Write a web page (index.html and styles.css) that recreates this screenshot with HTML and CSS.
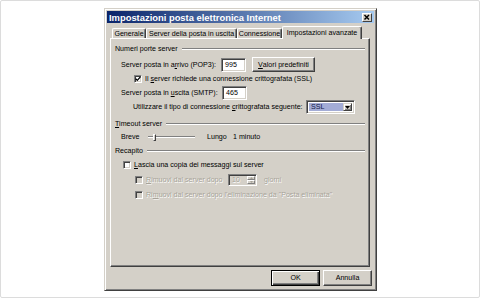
FILE: index.html
```html
<!DOCTYPE html>
<html lang="it">
<head>
  <meta charset="UTF-8">
  <meta name="viewport" content="width=device-width, initial-scale=1.0">
  <title>Impostazioni posta elettronica Internet</title>
  <link rel="stylesheet" href="styles.css">
</head>
<body>
  <div class="frame">
    <div class="dialog">
      <div class="titlebar">
        <span class="title">Impostazioni posta elettronica Internet</span>
        <span class="close">
          <svg width="8" height="7" viewBox="0 0 8 7"><path d="M1.5 1l4.5 4.6M6 1L1.5 5.6" stroke="#000" stroke-width="1.4" fill="none"/></svg>
        </span>
      </div>

      <div class="tabs">
        <div class="tab t1">Generale</div>
        <div class="tab t2">Server della posta in uscita</div>
        <div class="tab t3">Connessione</div>
        <div class="tab t4 active">Impostazioni avanzate</div>
      </div>

      <div class="panel">
        <div class="legend first"><span>Numeri porte server</span><i class="etch"></i></div>

        <div class="row pop">
          <span class="lbl w100">Server posta in a<u>r</u>rivo (POP3):</span>
          <span class="field">995</span>
          <span class="btn defaults"><u>V</u>alori predefiniti</span>
        </div>

        <div class="row ssl">
          <span class="check">
            <svg width="6" height="6" viewBox="0 0 6 6"><polyline points="0.6,2.6 2.3,4.4 5.4,0.9" stroke="#000" stroke-width="1.3" fill="none"/></svg>
          </span>
          <span class="cl">Il <u>s</u>erver richiede una connessione crittografata (SSL)</span>
        </div>

        <div class="row smtp">
          <span class="lbl w101">Server posta in <u>u</u>scita (SMTP):</span>
          <span class="field">465</span>
        </div>

        <div class="row crypt">
          <span class="lbl w173">Utilizzare il tipo di connessione <u>c</u>rittografata seguente:</span>
          <span class="select">
            <span class="sel-val">SSL</span>
            <span class="sel-btn">
              <svg width="5" height="3" viewBox="0 0 5 3"><polygon points="0,0 5,0 2.5,3" fill="#000"/></svg>
            </span>
          </span>
        </div>

        <div class="legend second"><span><u>T</u>imeout server</span><i class="etch"></i></div>

        <div class="row slider-row">
          <span class="lbl w27">Breve</span>
          <span class="slider"><i class="track"></i><i class="thumb"></i></span>
          <span class="lbl w26 lungo">Lungo</span>
          <span>1 minuto</span>
        </div>

        <div class="legend third"><span>Recapito</span><i class="etch"></i></div>

        <div class="row keep">
          <span class="check"></span>
          <span class="cl"><u>L</u>ascia una copia dei messaggi sul server</span>
        </div>

        <div class="row remove1 off">
          <span class="check"></span>
          <span class="cl w82"><u>R</u>imuovi dal server dopo</span>
          <span class="spin">
            <span class="spin-val">10</span>
            <span class="spin-btns">
              <span class="spin-b"><svg width="3" height="2" viewBox="0 0 3 2"><polygon points="0,2 3,2 1.5,0" fill="#a7a399"/></svg></span>
              <span class="spin-b"><svg width="3" height="2" viewBox="0 0 3 2"><polygon points="0,0 3,0 1.5,2" fill="#a7a399"/></svg></span>
            </span>
          </span>
          <span class="giorni">giorni</span>
        </div>

        <div class="row remove2 off">
          <span class="check"></span>
          <span class="cl">Ri<u>m</u>uovi dal server dopo l'eliminazione da "Posta eliminata"</span>
        </div>
      </div>

      <div class="buttons">
        <span class="btn big default">OK</span>
        <span class="btn big">Annulla</span>
      </div>
    </div>
  </div>
</body>
</html>
```

FILE: styles.css
```css
html, body {margin: 0; height: 100%; overflow: hidden}
body {
  background: #fff;
  font-family: "Liberation Sans", Arial, sans-serif;
  font-size: 7.1px;
  color: #000;
}

/* outer picture frame */
.frame {
  box-sizing: border-box;
  width: 480px;
  height: 298px;
  border: 1px solid #dcdcdc;
  border-radius: 2px;
  padding: 7px 0 0 103px;
}

/* classic window */
.dialog {
  box-sizing: border-box;
  width: 273px;
  height: 283px;
  background: #d4d0c8;
  border: 1px solid;
  border-color: #d4d0c8 #404040 #404040 #d4d0c8;
  box-shadow: inset 1px 1px #fff, inset -1px -1px #808080;
  padding: 2px;
  display: flex;
  flex-direction: column;
}
.titlebar {
  height: 12px;
  flex: none;
  background: linear-gradient(to right, #0a246a, #a6caf0);
  display: flex;
  align-items: center;
  justify-content: space-between;
  padding: 0 2px 0 2px;
}
.title {
  color: #fff;
  font-weight: bold;
  font-size: 9.4px;
  white-space: nowrap;
}
.close {
  box-sizing: border-box;
  width: 10px;
  height: 9px;
  background: #d4d0c8;
  border: 1px solid;
  border-color: #fff #404040 #404040 #fff;
  display: flex;
  align-items: center;
  justify-content: center;
}

/* tabs */
.tabs {
  position: relative;
  z-index: 1;
  display: flex;
  align-items: flex-end;
  height: 12px;
  flex: none;
  margin: 3px 0 0 5px;
}
.tab {
  box-sizing: border-box;
  height: 10px;
  border: 1px solid;
  border-color: #fff #404040 transparent #fff;
  border-bottom: none;
  border-radius: 2px 2px 0 0;
  box-shadow: inset -1px 0 #808080;
  display: flex;
  align-items: center;
  justify-content: center;
  white-space: nowrap;
}
.t1 {width: 34px}
.t2 {width: 91px}
.t3 {width: 45px}
.t4 {width: 80px}
.tab.active {
  height: 13px;
  margin-bottom: -1px;
  background: #d4d0c8;
  padding-bottom: 1px;
}

.panel {
  box-sizing: border-box;
  height: 229px;
  flex: none;
  margin: 0 4px 0 3px;
  border: 1px solid;
  border-color: #fff #404040 #404040 #fff;
  box-shadow: inset -1px -1px #808080;
  padding: 5px 4px 0 4px;
}

/* group headings */
.legend {
  display: flex;
  align-items: center;
  height: 10px;
  white-space: nowrap;
}
.etch {
  flex: 1;
  height: 0;
  margin-left: 4px;
  border-top: 1px solid #808080;
  border-bottom: 1px solid #fff;
}
.second {margin-top: 5px}
.third {margin-top: 3px}

.row {
  display: flex;
  align-items: center;
  white-space: nowrap;
}
.lbl {flex: none}
.w100 {width: 100px}
.w101 {width: 101px}
.w173 {width: 173px}
.w27 {width: 27px}
.w26 {width: 26px}
.w82 {width: 82px}

.pop {height: 15px; margin-top: 3px; padding-left: 6px}
.ssl {height: 10px; margin-top: 2px; padding-left: 19px}
.smtp {height: 14px; margin-top: 2px; padding-left: 6px}
.crypt {height: 14px; padding-left: 18px}
.slider-row {height: 12px; margin-top: 2px; padding-left: 6px}
.keep {height: 10px; margin-top: 4px; padding-left: 8px}
.remove1 {height: 12px; margin-top: 4px; padding-left: 20px}
.remove2 {height: 10px; margin-top: 4px; padding-left: 20px}

/* sunken controls */
.field, .select, .spin, .check {
  box-sizing: border-box;
  border: 1px solid;
  border-color: #808080 #fff #fff #808080;
  box-shadow: inset 1px 1px #404040, inset -1px -1px #d4d0c8;
  background: #fff;
}
.field {
  width: 25px;
  height: 14px;
  padding-left: 3px;
  line-height: 12px;
}
.check {
  width: 8px;
  height: 8px;
  flex: none;
  display: flex;
  align-items: center;
  justify-content: center;
}
.cl {margin-left: 3px}

.btn {
  box-sizing: border-box;
  display: flex;
  align-items: center;
  justify-content: center;
  background: #d4d0c8;
  border: 1px solid;
  border-color: #fff #404040 #404040 #fff;
  box-shadow: inset -1px -1px #808080;
}
.defaults {
  width: 63px;
  height: 15px;
  margin-left: 6px;
}

.select {
  width: 49px;
  height: 14px;
  display: flex;
  padding: 2px;
}
.sel-val {
  flex: 1;
  background: #a3acd6;
  color: #14204c;
  padding-left: 2px;
  line-height: 8px;
}
.sel-btn {
  box-sizing: border-box;
  width: 9px;
  background: #d4d0c8;
  border: 1px solid;
  border-color: #d4d0c8 #404040 #404040 #d4d0c8;
  box-shadow: inset 1px 1px #fff, inset -1px -1px #808080;
  display: flex;
  align-items: center;
  justify-content: center;
}

/* slider: track and thumb share one grid cell */
.slider {
  width: 47px;
  height: 12px;
  flex: none;
  display: grid;
  align-items: center;
}
.track, .thumb {grid-area: 1 / 1}
.track {
  height: 0;
  border-top: 1px solid #808080;
  border-bottom: 1px solid #fff;
}
.thumb {
  box-sizing: border-box;
  justify-self: start;
  width: 3px;
  height: 7px;
  margin-left: 5px;
  background: #d4d0c8;
  border: 1px solid;
  border-color: #fff #404040 #404040 #fff;
}
.lungo {margin-left: 12px}

/* disabled */
.off {color: #a7a399; text-shadow: 0.6px 0.6px 0 #fff}
.off .check {background: #d4d0c8}
.spin {
  width: 29px;
  height: 12px;
  display: flex;
  background: #d4d0c8;
  padding: 1px;
}
.spin-val {flex: 1; padding-left: 2px; line-height: 8px}
.spin-btns {
  width: 8px;
  display: flex;
  flex-direction: column;
}
.spin-b {
  box-sizing: border-box;
  flex: 1;
  border: 1px solid;
  border-color: #fff #808080 #808080 #fff;
  display: flex;
  align-items: center;
  justify-content: center;
}
.giorni {margin-left: 7px}

.buttons {
  display: flex;
  justify-content: flex-end;
  gap: 3px;
  margin-top: 3px;
  padding-right: 2px;
}
.big {
  width: 49px;
  height: 16px;
}
.default {
  border-color: #000;
  box-shadow: inset 1px 1px #fff, inset -1px -1px #404040, inset -2px -2px #808080;
}
```
